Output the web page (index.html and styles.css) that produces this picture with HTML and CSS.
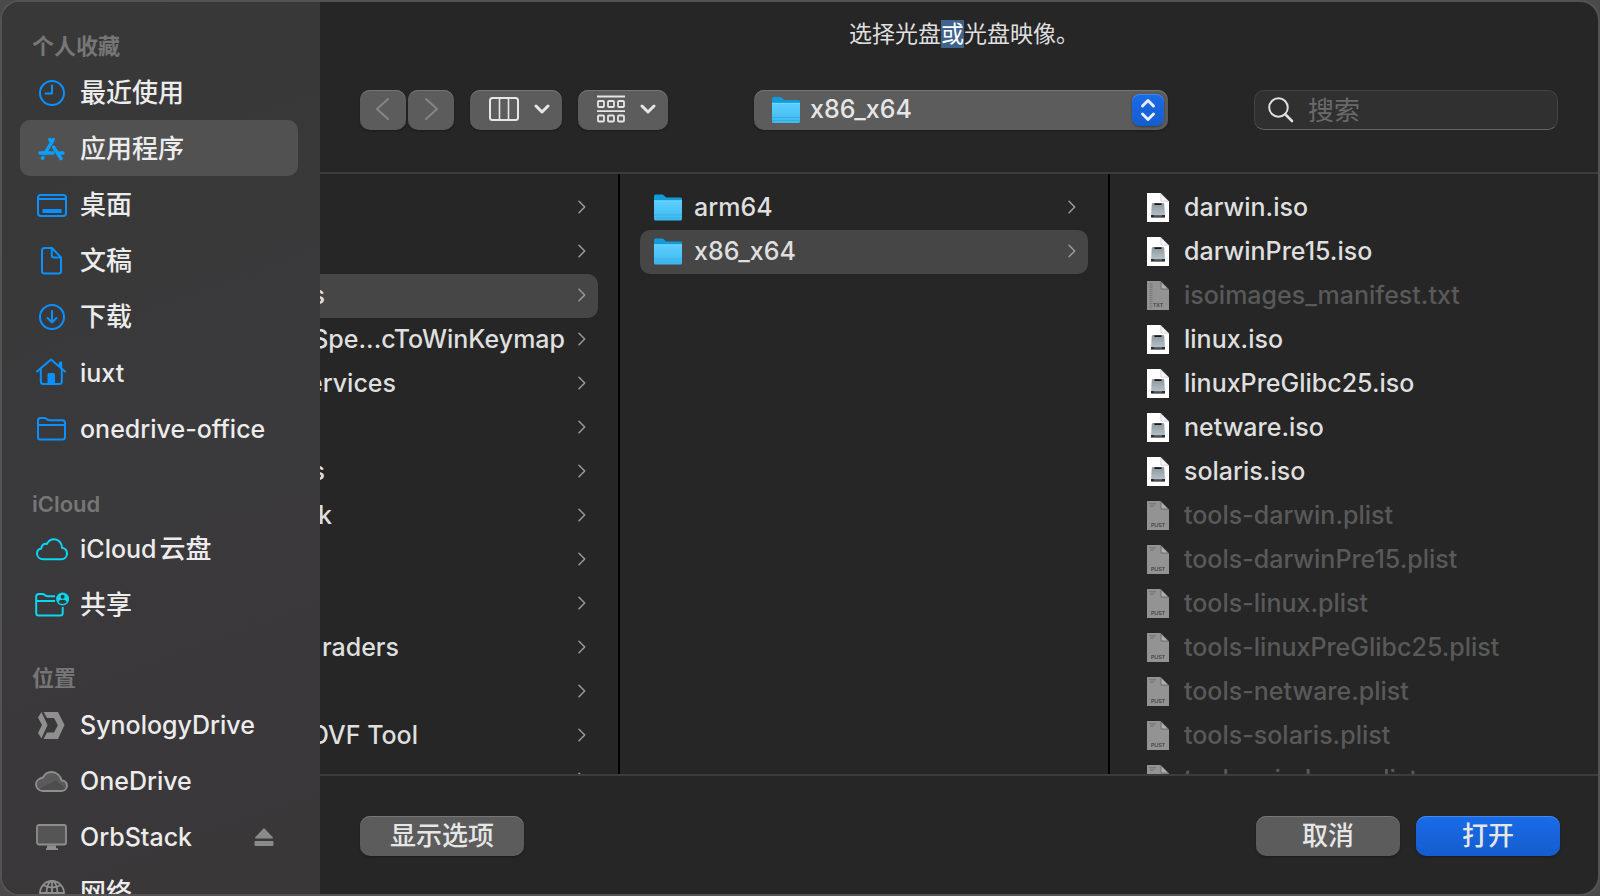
FILE: index.html
```html
<!DOCTYPE html>
<html lang="zh-CN">
<head>
<meta charset="utf-8">
<title>选择光盘或光盘映像</title>
<meta name="viewport" content="width=device-width, initial-scale=1">
<link rel="stylesheet" href="styles.css">
</head>
<body>
<svg class="defs" aria-hidden="true">
  <defs>
    <linearGradient id="g-folder" x1="0" y1="0" x2="0" y2="1">
      <stop offset="0" stop-color="#5ccfff"/><stop offset="1" stop-color="#3fb9f0"/>
    </linearGradient>
    <linearGradient id="g-disk" x1="0" y1="0" x2="0" y2="1">
      <stop offset="0" stop-color="#8c979c"/><stop offset="1" stop-color="#b4c1c7"/>
    </linearGradient>
    <symbol id="folder" viewBox="0 0 28 28">
      <path d="M0 2.500Q0 1 1.500 1H8q1 0 1.800.8L11 3q.8.9 2 .9h13.500Q28 3.900 28 5.400V12H0z" fill="#119bdc"/>
      <path d="M0 7h28v18.500q0 1.500-1.500 1.500h-25Q0 27 0 25.500z" fill="url(#g-folder)"/>
      <path d="M0 7.300h28" stroke="#7edcff" stroke-width=".7"/>
      <path d="M0 21.500h28M0 24.500h28" stroke="#2fa3da" stroke-width=".6"/>
    </symbol>
    <symbol id="iso" viewBox="0 0 22 29">
      <path d="M0 0h13.500L22 8.500V29H0z" fill="#fff"/>
      <path d="M13.500 0v7q0 1.500 1.500 1.500h7z" fill="#c9cccd"/>
      <path d="M14.300 1.500v5.300q0 .9.900.9h5.400z" fill="#f5f5f5"/>
      <path d="M6 10h10q1 0 1.200 1l.8 11.500H4L4.800 11Q5 10 6 10z" fill="url(#g-disk)"/>
      <rect x="7.500" y="10.300" width="7" height="1.700" fill="#15181a"/>
      <rect x="4" y="22" width="14" height="2.600" fill="#2b2f31"/>
      <rect x="7" y="22" width="8" height="1.600" fill="#5d666b"/>
    </symbol>
    <symbol id="plist" viewBox="0 0 22 29">
      <path d="M0 0h13.500L22 8.500V29H0z" fill="#939393"/>
      <path d="M13.500 0v7q0 1.500 1.500 1.500h7z" fill="#6f6f6f"/>
      <path d="M14.500 1.500v5q0 1 1 1h5z" fill="#b0b0b0"/>
      <path d="M2 2.500h7M3 4h5M3 5.500h3" stroke="#747474" stroke-width=".8"/>
      <text x="11" y="26" class="badge">PLIST</text>
    </symbol>
    <symbol id="txt" viewBox="0 0 22 29">
      <path d="M0 0h13.500L22 8.500V29H0z" fill="#939393"/>
      <path d="M13.500 0v7q0 1.500 1.500 1.500h7z" fill="#6f6f6f"/>
      <path d="M14.500 1.500v5q0 1 1 1h5z" fill="#b0b0b0"/>
      <path d="M4 2v25" stroke="#7d7d7d" stroke-width="3" stroke-dasharray="1.200 .8"/>
      <text x="11" y="26" class="badge">TXT</text>
    </symbol>
    <symbol id="chev" viewBox="0 0 8 14">
      <path d="M1 1.300 6.700 7 1 12.700" fill="none" stroke="currentColor" stroke-width="1.500" stroke-linecap="round" stroke-linejoin="round"/>
    </symbol>
    <symbol id="down" viewBox="0 0 16 10">
      <path d="M2 2l6 6 6-6" fill="none" stroke="currentColor" stroke-width="3" stroke-linecap="round" stroke-linejoin="round"/>
    </symbol>
  </defs>
</svg>

<div class="window">
  <nav class="sidebar" aria-label="边栏">
    <h2 class="group-title cjk">个人收藏</h2>
    <a class="item" href="#">
      <svg class="icon" viewBox="0 0 34 34"><g fill="none" stroke="currentColor" stroke-width="2" stroke-linecap="round" stroke-linejoin="round"><circle cx="17" cy="17" r="12"/><path d="M17 9.500V17.500H10.500"/></g></svg>
      <span class="zh">最近使用</span></a>
    <a class="item current" href="#" aria-current="page">
      <svg class="icon bright" viewBox="0 0 34 34"><g fill="none" stroke="currentColor" stroke-linecap="round" stroke-linejoin="round"><path d="M18.300 7.500 10.200 21M14.800 7.500l2 3.200M18.500 15 26 26.500" stroke-width="3.400"/><path d="M5 21h13M25 21h3" stroke-width="3.400"/><path d="M8 25.500 7.500 26.300" stroke-width="3.400"/></g></svg>
      <span class="zh">应用程序</span></a>
    <a class="item" href="#">
      <svg class="icon" viewBox="0 0 34 34"><g fill="none" stroke="currentColor" stroke-width="2"><rect x="3" y="7" width="28" height="21" rx="3"/><path d="M3 11h28"/></g><rect x="7.500" y="21" width="19" height="4" rx=".5" fill="currentColor"/></svg>
      <span class="zh">桌面</span></a>
    <a class="item" href="#">
      <svg class="icon" viewBox="0 0 34 34"><g fill="none" stroke="currentColor" stroke-width="2" stroke-linejoin="round"><path d="M9.500 4H17l9 9.500V27q0 2.500-2.500 2.500h-14Q7 29.500 7 27V6.500Q7 4 9.500 4z"/><path d="M16.800 4v7.500q0 2 2 2H26"/></g></svg>
      <span class="zh">文稿</span></a>
    <a class="item" href="#">
      <svg class="icon" viewBox="0 0 34 34"><g fill="none" stroke="currentColor" stroke-width="2" stroke-linecap="round" stroke-linejoin="round"><circle cx="17" cy="17" r="12"/><path d="M17 11v11M12.500 18l4.500 4.500 4.500-4.500"/></g></svg>
      <span class="zh">下载</span></a>
    <a class="item" href="#">
      <svg class="icon" viewBox="0 0 34 34"><g fill="none" stroke="currentColor" stroke-width="2" stroke-linecap="round" stroke-linejoin="round"><path d="M2 15.500 16 3.500l14 12"/><path d="M5.800 13V25.500q0 2.500 2.500 2.500h16q2.500 0 2.500-2.500V13"/><path d="M24.800 6.500v4.500M26.300 6.500v5.500" stroke-width="1.800"/></g><path d="M12.500 27.500v-9q0-1.500 1.500-1.500h4.500q1.500 0 1.500 1.500v9z" fill="currentColor"/></svg>
      <span>iuxt</span></a>
    <a class="item" href="#">
      <svg class="icon" viewBox="0 0 34 34"><g fill="none" stroke="currentColor" stroke-width="2" stroke-linejoin="round"><path d="M3 25V8.500Q3 6 5.500 6h4q1 0 2 .9l1 .7q.8.600 2 .6h13Q30 8.200 30 10.700V25q0 2.500-2.500 2.500h-22Q3 27.500 3 25z"/><path d="M3 13h27"/></g></svg>
      <span>onedrive-office</span></a>

    <h2 class="group-title">iCloud</h2>
    <a class="item" href="#">
      <svg class="icon cyan" viewBox="0 0 34 34"><path d="M8.500 27.200h17.700c3.500 0 5.800-2.600 5.800-5.700 0-3.200-2.300-5.500-5-5.800C26.800 11 23.600 7.200 19.300 7.200c-3.400 0-6 1.800-7.300 4.700-3.600-.6-5.700 1.800-5.700 4.600C3.700 17 2 19 2 21.500c0 3.200 2.700 5.700 6.500 5.700z" fill="none" stroke="currentColor" stroke-width="2" stroke-linejoin="round"/></svg>
      <span>iCloud<span class="zh after-latin">云盘</span></span></a>
    <a class="item" href="#">
      <svg class="icon cyan" viewBox="0 0 34 34"><g fill="none" stroke="currentColor" stroke-width="2" stroke-linejoin="round"><path d="M20 8.200h-7.500q-1 0-1.800-.6L9.500 6.800Q8.500 6 7.500 6H4Q1.200 6 1.200 8.500V25q0 2.500 2.500 2.500h21.500q2.500 0 2.500-2.500v-6"/><path d="M1.200 13H20"/></g><circle cx="27.600" cy="11" r="6.500" fill="currentColor"/><g fill="#3a3939"><circle cx="27.600" cy="8.800" r="2"/><path d="M23.600 14.200q0-2.500 4-2.500t4 2.500q-1.500 1.800-4 1.800t-4-1.800z"/></g></svg>
      <span class="zh">共享</span></a>

    <h2 class="group-title cjk">位置</h2>
    <a class="item" href="#">
      <svg class="icon gray" viewBox="0 0 34 34"><g fill="currentColor"><path d="M6.500 4 3 9.500 7 17l-4 8 3.500 5.500L12.500 17z"/><path d="M8.500 4H23l6.500 13L23 31H8.500l3.500-6.500h7l3.800-7.300-3.800-7.200h-7z"/></g></svg>
      <span>SynologyDrive</span></a>
    <a class="item" href="#">
      <svg class="icon gray" viewBox="0 0 34 34"><path d="M8 27h18c3.500 0 6-2.200 6-5.200s-2.300-5.200-5.500-5.500C25.500 11.500 21.500 8 16.500 8c-4 0-7 2.300-8.500 5.500C4.200 14.200 1 16.800 1 20.500S4 27 8 27z" fill="#5a5a5a"/><path d="M4 25 21 16.500l9 8-2 2H7z" fill="#4d4d4d"/><path d="M8 27h18c3.500 0 6-2.200 6-5.200s-2.300-5.200-5.500-5.500C25.500 11.500 21.500 8 16.500 8c-4 0-7 2.300-8.500 5.500C4.200 14.200 1 16.800 1 20.500S4 27 8 27z" fill="none" stroke="currentColor" stroke-width="1.800"/></svg>
      <span>OneDrive</span></a>
    <div class="item">
      <svg class="icon gray" viewBox="0 0 34 34"><rect x="2" y="5" width="29" height="19.500" rx="2" fill="#555" stroke="currentColor" stroke-width="1.800"/><path d="M12 25.500h9V28l2 .5V30H11v-1.500l1-.5z" fill="currentColor"/></svg>
      <a class="item-link" href="#">OrbStack</a>
      <button class="eject" type="button" aria-label="推出 OrbStack"><svg viewBox="0 0 20 20"><path d="M10 1 19 10.500q.5 1-.5 1h-17q-1 0-.5-1z" fill="currentColor"/><rect x=".5" y="14" width="19" height="5" rx="1" fill="currentColor"/></svg></button>
    </div>
    <a class="item" href="#">
      <svg class="icon gray" viewBox="0 0 34 34"><g fill="none" stroke="currentColor" stroke-width="1.800"><circle cx="17" cy="17" r="12"/><ellipse cx="17" cy="17" rx="5.500" ry="12"/><path d="M17 5v24M5 17h24M8 9q9 5 18 0M8 25q9-5 18 0"/></g></svg>
      <span class="zh">网络</span></a>
  </nav>

  <main class="panel">
    <header class="top">
      <h1 class="message">选择光盘<mark>或</mark>光盘映像。</h1>
      <div class="toolbar">
        <div class="tools">
          <div class="pair">
            <button class="btn nav" type="button" aria-label="后退" disabled><svg width="14" height="24" viewBox="0 0 14 24"><path d="M12 2 1 12l11 10"/></svg></button>
            <button class="btn nav" type="button" aria-label="前进" disabled><svg width="14" height="24" viewBox="0 0 14 24"><path d="M2 2l11 10L2 22"/></svg></button>
          </div>
          <button class="btn view" type="button" aria-label="分栏显示">
            <svg width="30" height="24" viewBox="0 0 30 24"><g fill="none" stroke="currentColor"><rect x="1" y="1" width="28" height="22" rx="2.500" stroke-width="2"/><path d="M10.500 1v22M19.500 1v22" stroke-width="1.600"/></g></svg>
            <svg width="16" height="10"><use href="#down"/></svg>
          </button>
          <button class="btn view group" type="button" aria-label="分组方式">
            <svg width="28" height="28" viewBox="0 0 28 28"><g fill="none" stroke="currentColor" stroke-width="1.800"><path d="M0 1.500h28M0 16.200h28"/><rect x="1" y="6" width="6" height="6" rx="1"/><rect x="11" y="6" width="6" height="6" rx="1"/><rect x="21" y="6" width="6" height="6" rx="1"/><rect x="1" y="20.500" width="6" height="6" rx="1"/><rect x="11" y="20.500" width="6" height="6" rx="1"/><rect x="21" y="20.500" width="6" height="6" rx="1"/></g></svg>
            <svg width="16" height="10"><use href="#down"/></svg>
          </button>
        </div>
        <div class="popup">
          <svg class="popup-folder"><use href="#folder"/></svg>
          <select aria-label="当前文件夹"><option>x86_x64</option></select>
          <span class="stepper"><svg width="16" height="24" viewBox="0 0 16 24"><path d="M2.500 8 8 2.500 13.500 8M2.500 16 8 21.500l5.500-5.500" fill="none" stroke="currentColor" stroke-width="3" stroke-linecap="round" stroke-linejoin="round"/></svg></span>
        </div>
        <label class="search">
          <svg width="26" height="26" viewBox="0 0 26 26"><g fill="none" stroke="currentColor" stroke-linecap="round"><circle cx="10.500" cy="10.500" r="9.300" stroke-width="2"/><path d="M17.500 17.500l6.500 6.500" stroke-width="2.600"/></g></svg>
          <input type="search" placeholder="搜索" aria-label="搜索">
        </label>
      </div>
    </header>

    <div class="columns">
      <ul class="column first">
        <li class="row"><svg class="chev"><use href="#chev"/></svg></li>
        <li class="row"><svg class="chev"><use href="#chev"/></svg></li>
        <li class="row selected"><span class="tail" style="width:5px">s</span><svg class="chev"><use href="#chev"/></svg></li>
        <li class="row"><span class="tail" style="width:245px">Spe...cToWinKeymap</span><svg class="chev"><use href="#chev"/></svg></li>
        <li class="row"><span class="tail" style="width:76px">ervices</span><svg class="chev"><use href="#chev"/></svg></li>
        <li class="row"><svg class="chev"><use href="#chev"/></svg></li>
        <li class="row"><span class="tail" style="width:5px">s</span><svg class="chev"><use href="#chev"/></svg></li>
        <li class="row"><span class="tail" style="width:12px">k</span><svg class="chev"><use href="#chev"/></svg></li>
        <li class="row"><svg class="chev"><use href="#chev"/></svg></li>
        <li class="row"><svg class="chev"><use href="#chev"/></svg></li>
        <li class="row"><span class="tail" style="width:79px">raders</span><svg class="chev"><use href="#chev"/></svg></li>
        <li class="row"><svg class="chev"><use href="#chev"/></svg></li>
        <li class="row"><span class="tail" style="width:98px">OVF Tool</span><svg class="chev"><use href="#chev"/></svg></li>
        <li class="row"><span class="tail" style="width:18px">vn</span><svg class="chev"><use href="#chev"/></svg></li>
      </ul>
      <ul class="column">
        <li class="row"><svg class="ficon"><use href="#folder"/></svg><span>arm64</span><svg class="chev"><use href="#chev"/></svg></li>
        <li class="row selected"><svg class="ficon"><use href="#folder"/></svg><span>x86_x64</span><svg class="chev"><use href="#chev"/></svg></li>
      </ul>
      <ul class="column">
        <li class="row"><svg class="ficon"><use href="#iso"/></svg><span>darwin.iso</span></li>
        <li class="row"><svg class="ficon"><use href="#iso"/></svg><span>darwinPre15.iso</span></li>
        <li class="row off"><svg class="ficon"><use href="#txt"/></svg><span>isoimages_manifest.txt</span></li>
        <li class="row"><svg class="ficon"><use href="#iso"/></svg><span>linux.iso</span></li>
        <li class="row"><svg class="ficon"><use href="#iso"/></svg><span>linuxPreGlibc25.iso</span></li>
        <li class="row"><svg class="ficon"><use href="#iso"/></svg><span>netware.iso</span></li>
        <li class="row"><svg class="ficon"><use href="#iso"/></svg><span>solaris.iso</span></li>
        <li class="row off"><svg class="ficon"><use href="#plist"/></svg><span>tools-darwin.plist</span></li>
        <li class="row off"><svg class="ficon"><use href="#plist"/></svg><span>tools-darwinPre15.plist</span></li>
        <li class="row off"><svg class="ficon"><use href="#plist"/></svg><span>tools-linux.plist</span></li>
        <li class="row off"><svg class="ficon"><use href="#plist"/></svg><span>tools-linuxPreGlibc25.plist</span></li>
        <li class="row off"><svg class="ficon"><use href="#plist"/></svg><span>tools-netware.plist</span></li>
        <li class="row off"><svg class="ficon"><use href="#plist"/></svg><span>tools-solaris.plist</span></li>
        <li class="row off"><svg class="ficon"><use href="#plist"/></svg><span>tools-windows.plist</span></li>
      </ul>
    </div>

    <footer class="actions">
      <button class="btn options" type="button">显示选项</button>
      <button class="btn" type="button">取消</button>
      <button class="btn primary" type="submit">打开</button>
    </footer>
  </main>
</div>
</body>
</html>
```
FILE: styles.css
```css
* { box-sizing: border-box; }

body {
  margin: 0;
  background: #4a4a4a;
  color: #dfdfdf;
  font-family: Inter, "Noto Sans CJK SC", sans-serif;
  font-size: 25px;
  font-weight: 500;
  line-height: 32px;
}

.defs { position: absolute; width: 0; height: 0; }

.badge {
  font: 600 5px Inter, sans-serif;
  text-anchor: middle;
  fill: #3c3c3c;
}

.window {
  display: flex;
  height: 100vh;
  border: 2px solid #535353;
  border-radius: 20px;
  overflow: hidden;
  background: #262626;
}

/* Sidebar */
.sidebar {
  flex: 0 0 318px;
  overflow: hidden;
  padding: 0 22px 0 18px;
  background: linear-gradient(160deg, #383838, #3a393b 50%, #3a3739);
}

.group-title {
  display: flex;
  align-items: flex-end;
  height: 64px;
  margin: 0;
  padding: 0 12px;
  color: #767676;
  font-size: 22px;
  font-weight: 600;
}

.group-title.cjk { padding-bottom: 2px; }
.group-title:first-child { height: 62px; }

.item {
  display: flex;
  align-items: center;
  gap: 11px;
  height: 56px;
  padding: 2px 24px 0 15px;
  border-radius: 10px;
  color: #ececec;
  text-decoration: none;
  white-space: nowrap;
}

.zh { font-size: 26px; }
.after-latin { margin-left: 3px; }
.item.current { background: #525152; }
.item-link { flex: 1; color: inherit; text-decoration: none; }

.icon { flex: none; width: 34px; height: 34px; color: #0a91ff; }
.icon.bright { color: #0aa0ff; }
.icon.cyan { color: #0ad7f2; }
.icon.gray { color: #8f8f8f; }

.eject {
  display: flex;
  padding: 0;
  border: 0;
  background: none;
  color: #8a8a8a;
}
.eject svg { width: 20px; height: 20px; }

/* Main panel */
.panel {
  flex: 1;
  display: flex;
  flex-direction: column;
  min-width: 0;
}

.top {
  padding: 18px 40px 42px;
  border-bottom: 2px solid #3c3c3c;
}

.message {
  margin: 0 0 42px;
  padding-left: 10px;
  font-size: 23px;
  font-weight: 400;
  line-height: 28px;
  text-align: center;
}
.message mark {
  display: inline-block;
  background: #3f638b;
  color: #fff;
}

.toolbar, .tools, .pair { display: flex; }
.toolbar { justify-content: space-between; }
.tools { gap: 16px; }
.pair { gap: 2px; }

.btn {
  display: flex;
  align-items: center;
  justify-content: center;
  width: 144px;
  height: 40px;
  padding: 0;
  border: 0;
  border-radius: 10px;
  background: #5c5c5c;
  box-shadow: inset 0 1px #767676, 0 1px 2px #1a1a1a;
  color: #e6e6e6;
  font: 500 26px/32px Inter, "Noto Sans CJK SC", sans-serif;
}
.btn.nav { width: 46px; padding-bottom: 2px; }
.btn.nav svg {
  fill: none;
  stroke: #858585;
  stroke-width: 2;
  stroke-linecap: round;
  stroke-linejoin: round;
}
.btn.view { width: 92px; gap: 15px; padding: 0 0 2px 6px; }
.btn.view.group { width: 90px; }
.btn.options { width: 164px; margin-right: auto; }
.btn.primary {
  background: linear-gradient(#196be8, #155dcd);
  box-shadow: inset 0 1px #4488ee, 0 1px 2px #1a1a1a;
}

.popup { position: relative; width: 414px; }
.popup select {
  appearance: none;
  width: 100%;
  height: 40px;
  padding: 0 52px 2px 56px;
  border: 0;
  border-radius: 10px;
  background: #5c5c5c;
  box-shadow: inset 0 1px #767676, 0 1px 2px #1a1a1a;
  color: #e6e6e6;
  font: inherit;
}
.popup-folder {
  position: absolute;
  top: 6px;
  left: 18px;
  width: 28px;
  height: 28px;
  pointer-events: none;
}
.stepper {
  position: absolute;
  top: 4px;
  right: 4px;
  display: flex;
  align-items: center;
  justify-content: center;
  width: 32px;
  height: 32px;
  border-radius: 8px;
  background: linear-gradient(#196be8, #155dcd);
  box-shadow: inset 0 1px #4488ee, 0 1px 2px #3a3a3a;
  color: #e4edfb;
  pointer-events: none;
}

.search {
  display: flex;
  align-items: center;
  gap: 14px;
  width: 304px;
  height: 40px;
  padding: 0 13px;
  border: 1px solid #424242;
  border-bottom-color: #636363;
  border-radius: 10px;
  background: #303030;
}
.search svg { flex: none; }
.search input {
  appearance: none;
  flex: 1;
  min-width: 0;
  padding: 2px 0 0;
  border: 0;
  outline: 0;
  background: none;
  color: inherit;
  font: 400 26px/32px Inter, "Noto Sans CJK SC", sans-serif;
}
.search input::placeholder { color: #6a6a6a; opacity: 1; }

/* Browser columns */
.columns {
  flex: 1;
  display: grid;
  grid-template-columns: 300px 490px 1fr;
  min-height: 0;
}
.column {
  min-width: 0;
  margin: 0;
  padding: 12px 20px 0;
  overflow: hidden;
  border-right: 2px solid #000;
  list-style: none;
}
.column:last-child { border-right: 0; }
.column.first { padding-left: 0; }

.row {
  display: flex;
  align-items: center;
  gap: 12px;
  height: 44px;
  padding: 0 12px 2px 14px;
  border-radius: 10px;
  white-space: nowrap;
}
.row.selected { background: #464646; }
.row.off { color: #595959; }
.first .row { padding-left: 0; border-radius: 0 10px 10px 0; }

.tail {
  display: flex;
  justify-content: flex-end;
  overflow: hidden;
}
.ficon { flex: none; width: 28px; height: 29px; }
.chev { flex: none; width: 8px; height: 14px; margin-left: auto; color: #9a9a9a; }

.actions {
  display: flex;
  gap: 16px;
  padding: 40px 38px 38px 40px;
  border-top: 2px solid #3c3c3c;
}
```
